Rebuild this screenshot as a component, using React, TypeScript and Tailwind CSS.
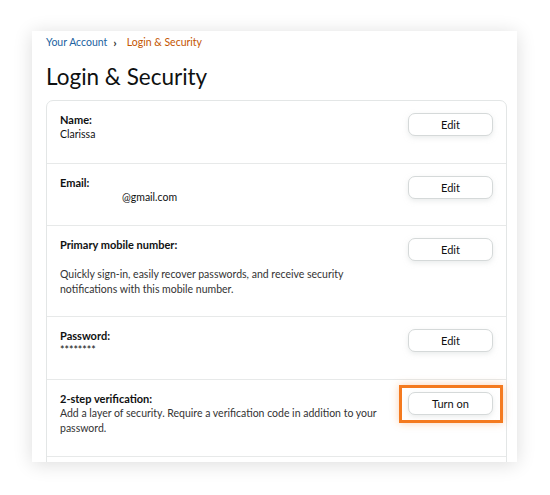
import React from 'react';

const font = { fontFamily: 'Lato, "Noto Sans", Arial, sans-serif' };

const EditButton = ({ label = 'Edit' }: { label?: string }) => (
  <button className="w-[85px] h-[23px] shrink-0 rounded-[7px] border border-[#d5d9d9] bg-white text-[11px] text-[#0f1111] shadow-[0_2px_5px_rgba(213,217,217,0.5)]">
    {label}
  </button>
);

type Row = {
  label: string;
  value?: React.ReactNode;
  note?: React.ReactNode;
  height: string;
};

const rows: Row[] = [
  { label: 'Name:', value: 'Clarissa', height: 'h-[63px]' },
  {
    label: 'Email:',
    value: <span className="pl-[62px]">@gmail.com</span>,
    height: 'h-[62px]',
  },
  {
    label: 'Primary mobile number:',
    note: (
      <p className="mt-[15px] text-[#333]">
        Quickly sign-in, easily recover passwords, and receive security
        <br />
        notifications with this mobile number.
      </p>
    ),
    height: 'h-[91px]',
  },
  { label: 'Password:', value: '********', height: 'h-[63px]' },
];

export default function App() {
  return (
    <div className="w-[550px] h-[495px] bg-white pt-[31px] pl-[32px]" style={font}>
      <div className="w-[485px] h-[431px] overflow-hidden bg-white pl-[14px] pr-[10px] shadow-[0_2px_18px_rgba(0,0,0,0.14)]">
        <nav className="flex items-center h-[22px] mt-[1px] text-[10.5px]">
          <span className="text-[#2162a1]">Your Account</span>
          <span className="ml-[6px] mr-[10px] text-[#333] text-[12px] font-bold leading-none">›</span>
          <span className="text-[#c45500]">Login &amp; Security</span>
        </nav>

        <h1 className="mt-[8px] text-[22.5px] leading-[30px] text-[#0f1111]">
          Login &amp; Security
        </h1>

        <div className="mt-[8px] rounded-[7px] border border-[#e3e6e6] text-[10.5px] leading-[15px] text-[#0f1111]">
          {rows.map((row) => (
            <div
              key={row.label}
              className={`${row.height} flex items-start justify-between border-b border-[#e7e9e9] pl-[13px] pr-[13px] pt-[11px]`}
            >
              <div>
                <div className="font-bold text-[11px]">{row.label}</div>
                {row.value ? <div>{row.value}</div> : null}
                {row.note}
              </div>
              <div className="pt-[1px]">
                <EditButton />
              </div>
            </div>
          ))}

          <div className="h-[77px] flex items-start justify-between border-b border-[#e7e9e9] pl-[13px] pr-[13px] pt-[11px]">
            <div>
              <div className="font-bold text-[11px]">2-step verification:</div>
              <p className="text-[#333]">
                Add a layer of security. Require a verification code in addition to your
                <br />
                password.
              </p>
            </div>
            <div className="relative mt-[1px]">
              <EditButton label="Turn on" />
              <div className="absolute -left-[9px] -right-[10px] -top-[7px] -bottom-[8px] border-[3px] border-[#f47a1f] shadow-[0_0_8px_rgba(244,122,31,0.35)]" />
            </div>
          </div>
          <div className="h-[20px]" />
        </div>
      </div>
    </div>
  );
}
